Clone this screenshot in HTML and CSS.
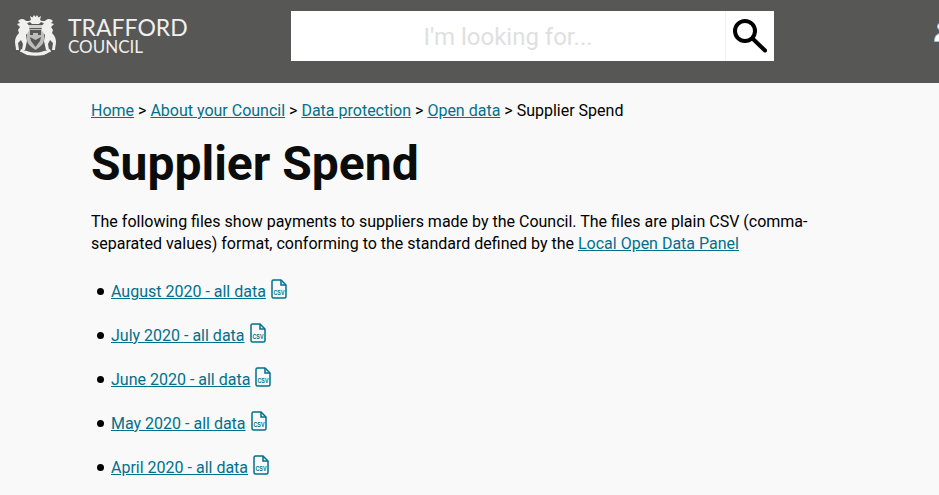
FILE: index.html
```html
<!DOCTYPE html>
<html lang="en">
<head>
<meta charset="utf-8">
<title>Supplier Spend</title>
<link rel="stylesheet" href="styles.css">
</head>
<body>
<header class="topbar">
  <a class="logo" href="#">
    <svg class="crest" width="43" height="41" viewBox="0 0 43 41" fill="#f0f0ee">
      <path d="M17 5l-1-4 2.500 1.500L20 0l1.500 2L23 0l1.500 2.500L27 1l-1 4 2 1-3 3h-7l-3-3z"/>
      <path d="M12 10h19l-1 3H13z" opacity=".8"/>
      <path d="M13 14h17v10c0 5-4 8-8.500 11C17 32 13 29 13 24z" fill="#bdbdbb"/>
      <path d="M16 15h11v5h-3v-2h-5v2h-3zM16 22l5.500 3 5.500-3-1 4-4.500 6-4.500-6z" fill="#575756"/>
      <path d="M12 6C9 3 6 4 4 6l2 2-3 1 3 3-2 3 1 3c-3 3-4 6-4 9 0 3 1 5 1 8h3l-1-7 3-3 2 4-1 6h3l2-9-1-6 3-4c1-3 0-6-2-8 2 0 3-1 3-2z"/>
      <path d="M31 6c3-3 6-2 8 0l-2 2 3 1-3 3 2 3-1 3c3 3 4 6 4 9 0 3-1 5-1 8h-3l1-7-3-3-2 4 1 6h-3l-2-9 1-6-3-4c-1-3 0-6 2-8-2 0-3-1-3-2z"/>
      <path d="M7 34c3 1 4 2 6 2 6 2 11 2 17 0 2 0 3-1 6-2l1 3c-3 0-4 2-7 3-6 1-11 1-17 0-3-1-4-3-7-3z"/>
    </svg>
    <span class="wordmark">
      <span class="wm-top">TRAFFORD</span>
      <span class="wm-bottom">COUNCIL</span>
    </span>
  </a>
  <form class="search">
    <div class="search-input">I'm looking for...</div>
    <button class="search-btn" type="button" aria-label="Search">
      <svg width="38" height="38" viewBox="0 0 38 38" fill="none" stroke="#000" stroke-width="4" stroke-linecap="round">
        <circle cx="14" cy="14" r="10"/>
        <path d="M21.500 21.500L34 33.500"/>
      </svg>
    </button>
  </form>
  <svg class="user" width="5" height="20" viewBox="0 0 5 20" fill="#fff" stroke="#8cc6f5" stroke-width="1">
    <circle cx="7" cy="4.500" r="3.500"/>
    <path d="M.5 19.500c0-5 2-8 6.500-8v8z"/>
  </svg>
</header>
<main class="content">
  <nav class="crumbs">
    <a href="#">Home</a> &gt; <a href="#">About your Council</a> &gt; <a href="#">Data protection</a> &gt; <a href="#">Open data</a> &gt; Supplier Spend
  </nav>
  <h1 class="title">Supplier Spend</h1>
  <p class="intro">The following files show payments to suppliers made by the Council. The files are plain CSV (comma-separated values) format, conforming to the standard defined by the <a href="#">Local Open Data Panel</a></p>
  <ul class="files">
    <li><a href="#">August 2020 - all data</a><svg class="csv" viewBox="0 0 16 20"><use href="#csv-icon"/></svg></li>
    <li><a href="#">July 2020 - all data</a><svg class="csv" viewBox="0 0 16 20"><use href="#csv-icon"/></svg></li>
    <li><a href="#">June 2020 - all data</a><svg class="csv" viewBox="0 0 16 20"><use href="#csv-icon"/></svg></li>
    <li><a href="#">May 2020 - all data</a><svg class="csv" viewBox="0 0 16 20"><use href="#csv-icon"/></svg></li>
    <li><a href="#">April 2020 - all data</a><svg class="csv" viewBox="0 0 16 20"><use href="#csv-icon"/></svg></li>
  </ul>
</main>
<svg class="defs" width="0" height="0">
  <defs>
    <g id="csv-icon">
      <path d="M1 2.500A1.500 1.500 0 0 1 2.500 1H10l5 5v11.500a1.500 1.500 0 0 1-1.500 1.500h-11A1.500 1.500 0 0 1 1 17.500z" fill="none" stroke="#00708c" stroke-width="1.500"/>
      <path d="M10 1v5h5" fill="none" stroke="#00708c" stroke-width="1.500"/>
      <text x="8" y="15.500" text-anchor="middle" font-family="Liberation Sans, sans-serif" font-size="7.500" font-weight="700" textLength="11" lengthAdjust="spacingAndGlyphs" fill="#00708c">CSV</text>
    </g>
  </defs>
</svg>
</body>
</html>
```
FILE: styles.css
```css
html, body {
  margin: 0;
  padding: 0;
}
body {
  height: 495px;
  overflow: hidden;
  background: #f9f9f9;
  color: #000;
  font-family: Roboto, "Liberation Sans", sans-serif;
  font-size: 16px;
  line-height: 22px;
}
a {
  color: #00708c;
  text-decoration: underline;
}
.topbar {
  height: 83px;
  background: #575756;
  display: flex;
  align-items: flex-start;
  overflow: hidden;
}
.logo {
  flex: none;
  display: flex;
  align-items: center;
  gap: 11px;
  width: 291px;
  height: 41px;
  margin-top: 15px;
  padding-left: 14px;
  box-sizing: border-box;
  text-decoration: none;
  color: #f0f0ee;
  font-family: Lato, "Noto Sans", sans-serif;
}
.crest {
  flex: none;
}
.wordmark {
  display: flex;
  flex-direction: column;
  margin-top: -1px;
}
.wm-top {
  font-size: 23px;
  line-height: 23px;
}
.wm-bottom {
  font-size: 17px;
  line-height: 16px;
}
.search {
  flex: none;
  display: flex;
  width: 483px;
  height: 50px;
  margin: 11px 0 0;
  background: #fff;
}
.search-input {
  width: 435px;
  box-sizing: border-box;
  border-right: 1px solid #f1f1f1;
  text-align: center;
  font-size: 24px;
  line-height: 52px;
  color: #e0e0e0;
}
.search-btn {
  flex: 1;
  padding: 0;
  border: 0;
  background: #fff;
  display: flex;
  align-items: center;
  justify-content: center;
}
.user {
  margin: 22px 0 0 160px;
  flex: none;
}
.content {
  padding: 17px 0 0 91px;
  width: 728px;
}
.crumbs {
  height: 22px;
}
.title {
  margin: 15px 0 0;
  font-size: 48px;
  line-height: 54px;
  font-weight: 700;
  color: #0b0c0c;
}
.intro {
  margin: 20px 0 0;
}
.files {
  list-style: none;
  margin: 24px 0 0;
  padding: 0 0 0 20px;
}
.files li {
  height: 22px;
  margin-bottom: 22px;
}
.files li::before {
  content: "";
  display: inline-block;
  width: 7px;
  height: 7px;
  margin: 0 7px 2px -14px;
  border-radius: 50%;
  background: #000;
}
.csv {
  width: 16px;
  height: 20px;
  margin-left: 5px;
  vertical-align: -2px;
}
.defs {
  position: absolute;
}
```
